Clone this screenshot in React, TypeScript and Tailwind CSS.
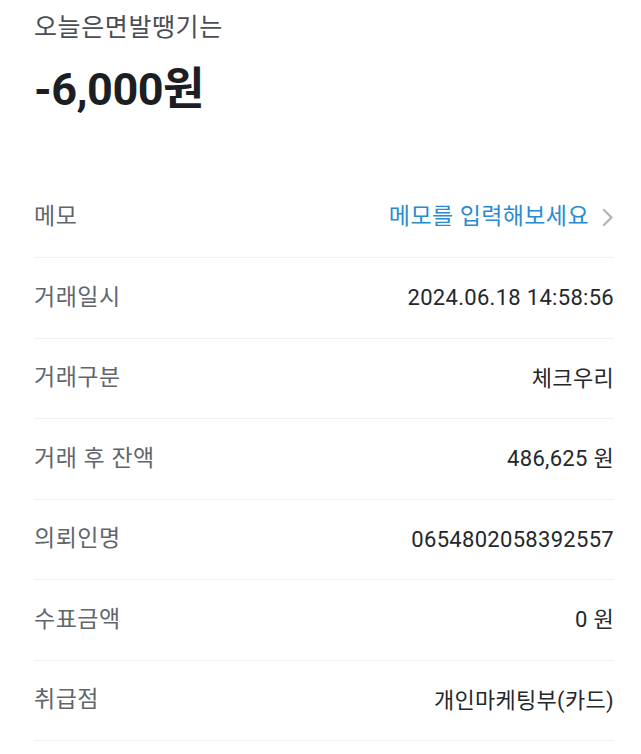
const rows: { label: string; value: string }[] = [
  { label: "거래일시", value: "2024.06.18 14:58:56" },
  { label: "거래구분", value: "체크우리" },
  { label: "거래 후 잔액", value: "486,625 원" },
  { label: "의뢰인명", value: "0654802058392557" },
  { label: "수표금액", value: "0 원" },
  { label: "취급점", value: "개인마케팅부(카드)" },
];

const font = { fontFamily: '"Roboto", "Noto Sans CJK KR", sans-serif' };

export default function App() {
  return (
    <div className="min-h-[754px] bg-white pl-[34px] pr-[27px] pt-3" style={font}>
      <div className="text-[25px] leading-[32px] tracking-[0.6px] text-[#4a4e54]">오늘은면발땡기는</div>
      <div className="mt-[18px] text-[45px] font-bold leading-[56px] tracking-[-0.5px] text-[#1b1e23]">
        -6,000원
      </div>

      <div className="mt-[59px]">
        <div className="flex h-[81px] items-center justify-between border-b border-[#eff1f3]">
          <span className="text-[23px] tracking-[0.5px] text-[#62666b]">메모</span>
          <span className="flex items-center gap-[13px] text-[23px] tracking-[0.4px] text-[#2a8bd0]">
            메모를 입력해보세요
            <svg width="12" height="19" viewBox="0 0 12 19" fill="none">
              <path d="M2 2l7.5 7.5L2 17" stroke="#b3b6ba" strokeWidth="2.4" strokeLinecap="round" strokeLinejoin="round" />
            </svg>
          </span>
        </div>
        {rows.map((r) => (
          <div
            key={r.label}
            className="flex h-[80.5px] items-center justify-between border-b border-[#eff1f3]"
          >
            <span className="text-[23px] tracking-[0.5px] text-[#62666b]">{r.label}</span>
            <span className="text-[22px] tracking-[0.3px] text-[#24272b]">{r.value}</span>
          </div>
        ))}
      </div>
    </div>
  );
}
